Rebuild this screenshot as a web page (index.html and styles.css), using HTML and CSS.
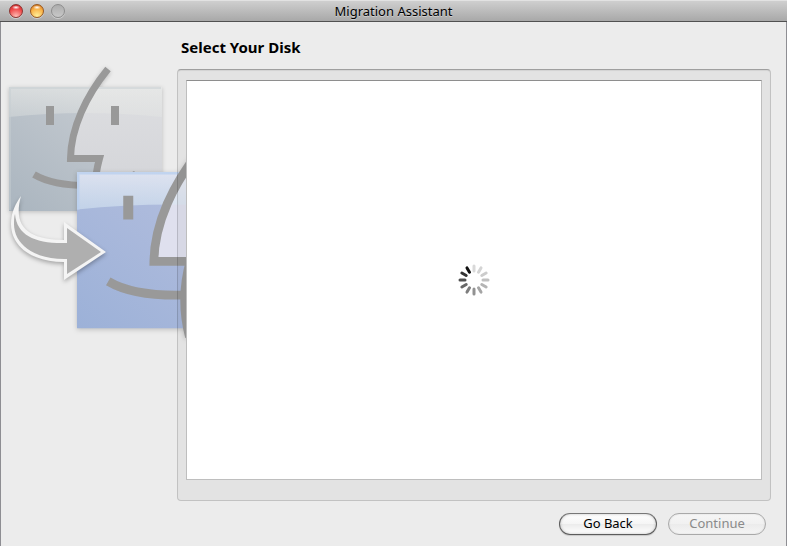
FILE: index.html
```html
<!DOCTYPE html>
<html lang="en">
<head>
<meta charset="UTF-8">
<meta name="viewport" content="width=device-width, initial-scale=1.0">
<title>Migration Assistant</title>
<link rel="stylesheet" href="styles.css">
</head>
<body>
<div class="window">
    <header class="titlebar">
        <div class="lights">
            <button class="light close" aria-label="Close"></button>
            <button class="light minimize" aria-label="Minimize"></button>
            <button class="light zoom" aria-label="Zoom" disabled></button>
        </div>
        <h1>Migration Assistant</h1>
    </header>
    <div class="content">
        <aside class="artwork">
            <svg width="186" height="340" viewBox="1 22 186 340" aria-hidden="true">
                <defs>
                    <linearGradient id="grayLeft" x1="1" y1="0" x2="0" y2="1">
                        <stop offset="0" stop-color="#cdd1d6"/>
                        <stop offset="1" stop-color="#aab5bf"/>
                    </linearGradient>
                    <linearGradient id="grayRight" x1="0" y1="0" x2="0" y2="1">
                        <stop offset="0" stop-color="#dddee1"/>
                        <stop offset="1" stop-color="#d2d3d7"/>
                    </linearGradient>
                    <linearGradient id="blueLeft" x1="1" y1="0" x2="0" y2="1">
                        <stop offset="0" stop-color="#b9c1df"/>
                        <stop offset="1" stop-color="#9cb1d8"/>
                    </linearGradient>
                    <linearGradient id="gloss" x1="0" y1="0" x2="0" y2="1">
                        <stop offset="0" stop-color="#ecedea" stop-opacity=".6"/>
                        <stop offset="1" stop-color="#e6e8e5" stop-opacity=".35"/>
                    </linearGradient>
                    <linearGradient id="blueGloss" x1="0" y1="0" x2="0" y2="1">
                        <stop offset="0" stop-color="#eef0f6" stop-opacity=".75"/>
                        <stop offset="1" stop-color="#d8e8f3" stop-opacity=".55"/>
                    </linearGradient>
                    <path id="profile" d="M95 87 C80 112 70 135 70 159 H100 C95 178 95 195 99 211 H162 V87 Z"/>
                    <path id="shine" d="M9 87 H162 V117 Q85 109 9 117 Z"/>
                    <g id="features">
                        <rect x="46" y="106" width="8" height="19"/>
                        <rect x="111" y="106" width="8" height="19"/>
                        <path class="line" d="M108 69 C86 96 71 128 70.500 158.500 H99.500 C94 178 94 200 99 219"/>
                        <path class="line" d="M34 174.500 C50 184 72 186 94 185.500 C112 185 125 181 136 174"/>
                    </g>
                </defs>
                <g class="face">
                    <rect x="9" y="87" width="153" height="124" fill="url(#grayLeft)"/>
                    <use href="#profile" fill="url(#grayRight)"/>
                    <use href="#shine" fill="url(#gloss)"/>
                    <path class="edge" d="M10 210 V88 H161"/>
                    <use href="#features"/>
                </g>
                <g class="face" transform="translate(65.750 63.250) scale(1.250)">
                    <rect x="9" y="87" width="153" height="125" fill="url(#blueLeft)"/>
                    <use href="#profile" fill="#dfe0ee"/>
                    <use href="#shine" fill="url(#blueGloss)"/>
                    <path class="edge blue" d="M10 117 V88 H161"/>
                    <use href="#features"/>
                </g>
                <g class="arrow">
                    <path fill="#f4f4f4" d="M21 196 C12 228 30 240 64 240 V222 L106 252 L64 280 V262 C30 262 11 245 11 224 C11 212 16 203 21 196 Z"/>
                    <path d="M15 214 C17 236 36 244 67 243 V228 L101 252 L67 274 V259 C34 260 14 244 14 224 C14 220 14 217 15 214 Z"/>
                </g>
            </svg>
        </aside>
        <main class="main">
            <h2>Select Your Disk</h2>
            <div class="panel">
                <div class="disk-list">
                    <svg class="spinner" width="32" height="32" viewBox="-16 -16 32 32" role="img" aria-label="Loading">
                        <line y1="-14" y2="-9" stroke="#d9d9d9"/>
                        <line y1="-14" y2="-9" stroke="#d4d4d4" transform="rotate(30)"/>
                        <line y1="-14" y2="-9" stroke="#cccccc" transform="rotate(60)"/>
                        <line y1="-14" y2="-9" stroke="#c0c0c0" transform="rotate(90)"/>
                        <line y1="-14" y2="-9" stroke="#b4b4b4" transform="rotate(120)"/>
                        <line y1="-14" y2="-9" stroke="#a5a5a5" transform="rotate(150)"/>
                        <line y1="-14" y2="-9" stroke="#929292" transform="rotate(180)"/>
                        <line y1="-14" y2="-9" stroke="#7e7e7e" transform="rotate(210)"/>
                        <line y1="-14" y2="-9" stroke="#686868" transform="rotate(240)"/>
                        <line y1="-14" y2="-9" stroke="#505050" transform="rotate(270)"/>
                        <line y1="-14" y2="-9" stroke="#343434" transform="rotate(300)"/>
                        <line y1="-14" y2="-9" stroke="#111111" transform="rotate(330)"/>
                    </svg>
                </div>
            </div>
            <div class="buttons">
                <button class="push">Go Back</button>
                <button class="push" disabled>Continue</button>
            </div>
        </main>
    </div>
</div>
</body>
</html>
```
FILE: styles.css
```css
* {
    box-sizing: border-box;
}
body {
    margin: 0;
    font-family: "Lucida Grande", "Noto Sans", sans-serif;
    font-size: 13px;
    line-height: 18px;
    color: #000;
    background: #ececec;
}
h1, h2 {
    margin: 0;
    font-size: 13px;
    font-weight: normal;
}
.window {
    display: flex;
    flex-direction: column;
    min-height: 100vh;
}
.titlebar {
    display: grid;
    grid-template-columns: 1fr auto 1fr;
    align-items: center;
    height: 22px;
    padding: 0 9px;
    border-top: 1px solid #e2e2e2;
    border-bottom: 1px solid #515151;
    background: linear-gradient(#cfcfcf, #a8a8a8);
}
.titlebar h1 {
    text-shadow: 0 1px 0 rgba(255, 255, 255, 0.4);
}
.lights {
    display: flex;
    gap: 7px;
}
.light {
    width: 14px;
    height: 14px;
    padding: 0;
    border: 1px solid #888;
    border-radius: 50%;
    box-shadow: 0 1px 0 rgba(255, 255, 255, 0.4);
}
.close {
    border-color: #8c3431;
    background: radial-gradient(ellipse 4px 2px at 50% 20%, #fff, transparent), radial-gradient(circle at 50% 95%, #ffc0b8, #f0494a 60%, #c5201f);
}
.minimize {
    border-color: #99591f;
    background: radial-gradient(ellipse 4px 2px at 50% 20%, #fff, transparent), radial-gradient(circle at 50% 90%, #fff09a, #f8b045 60%, #c8671b);
}
.zoom {
    border-color: #8d8d8d;
    background: linear-gradient(#adadad, #c8c8c8);
}

.content {
    flex: 1;
    display: flex;
    border: 1px solid #8e8e93;
    border-width: 0 1px;
}
.artwork {
    flex: 0 0 176px;
    min-width: 0;
    height: 340px;
}
.artwork svg {
    display: block;
}
.face {
    fill: #999;
    filter: drop-shadow(0 1px 2px rgba(0, 0, 0, 0.2));
}
.line {
    fill: none;
    stroke: #999;
    stroke-width: 7px;
}
.edge {
    fill: none;
    stroke: #c5ced2;
    stroke-width: 2px;
    opacity: 0.5;
}
.edge.blue {
    stroke: #b9d0ef;
    opacity: 0.8;
}
.arrow {
    fill: #afafaf;
    filter: drop-shadow(0 2px 2px rgba(0, 0, 0, 0.3));
}

.main {
    flex: 1;
    display: flex;
    flex-direction: column;
    padding: 16px 15px 11px 0;
}
.main h2 {
    margin: 0 0 13px 4px;
    font-size: 15px;
    font-weight: bold;
}
/* translucent so the artwork shows through behind the frame */
.panel {
    position: relative;
    flex: 1;
    display: flex;
    padding: 10px 8px 20px;
    border: 1px solid rgba(0, 0, 0, 0.15);
    border-top-color: rgba(0, 0, 0, 0.3);
    border-radius: 4px;
    background: rgba(0, 0, 0, 0.035);
    box-shadow: inset 0 1px 1px rgba(0, 0, 0, 0.08);
}
.disk-list {
    flex: 1;
    display: flex;
    align-items: center;
    justify-content: center;
    border: 1px solid #bebebe;
    border-top-color: #8e8e8e;
    background: #fff;
}
.spinner line {
    stroke-width: 3px;
    stroke-linecap: round;
}
.buttons {
    display: flex;
    justify-content: flex-end;
    gap: 11px;
    padding: 12px 5px 0 0;
}
.push {
    width: 98px;
    height: 22px;
    padding: 0 0 2px;
    font: inherit;
    color: #000;
    border: 1px solid #5c5c5c;
    border-top-color: #777;
    border-radius: 11px;
    background: linear-gradient(#fff, #f5f5f5 50%, #ebebeb 50%, #fff);
    box-shadow: 0 1px 1px rgba(0, 0, 0, 0.15), inset 0 0 3px rgba(0, 0, 0, 0.25);
}
.push:disabled {
    color: #8a8a8a;
    border-color: #a9a9a9;
    background: linear-gradient(#f6f6f6, #f1f1f1 50%, #ebebeb 50%, #f5f5f5);
    box-shadow: inset 0 0 2px rgba(0, 0, 0, 0.12);
}
```
